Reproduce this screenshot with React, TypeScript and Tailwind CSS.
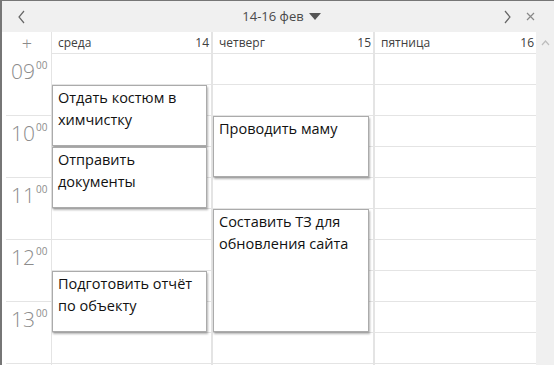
import React from 'react';

type Ev = { text: string; row: string };

const days: { name: string; num: number; events: Ev[] }[] = [
  {
    name: 'среда',
    num: 14,
    events: [
      { text: 'Отдать костюм в химчистку', row: 'row-start-2 row-span-2' },
      { text: 'Отправить документы', row: 'row-start-4 row-span-2' },
      { text: 'Подготовить отчёт по объекту', row: 'row-start-8 row-span-2' },
    ],
  },
  {
    name: 'четверг',
    num: 15,
    events: [
      { text: 'Проводить маму', row: 'row-start-3 row-span-2' },
      { text: 'Составить ТЗ для обновления сайта', row: 'row-start-6 row-span-4' },
    ],
  },
  { name: 'пятница', num: 16, events: [] },
];

const hours = ['09', '10', '11', '12', '13'];
const slots = Array.from({ length: 10 }, (_, i) => i);

const DayColumn: React.FC<{ day: (typeof days)[number]; last?: boolean; width: string }> = ({ day, last, width }) => (
  <div className={`${width} flex flex-col ${last ? '' : 'border-r-2 border-[#e4e4e4]'}`}>
    <div className="h-[22px] shrink-0 flex items-center justify-between pl-[6px] pr-[2px] border-b border-[#e4e4e4] text-[12px] text-[#404040]">
      <span>{day.name}</span>
      <span>{day.num}</span>
    </div>
    <div className="grid grid-rows-[repeat(10,31px)]">
      {slots.map((s) => (
        <div key={s} className="col-start-1 border-b border-[#e4e4e4]" style={{ gridRowStart: s + 1 }} />
      ))}
      {day.events.map((e) => (
        <div
          key={e.text}
          className={`col-start-1 ${e.row} z-10 mr-[4px] mb-[1px] border border-[#ababab] bg-white shadow-[1px_2px_2px_rgba(0,0,0,0.3)] px-[5px] pt-[1px] text-[14.5px] leading-[22px] text-[#111]`}
        >
          {e.text}
        </div>
      ))}
    </div>
  </div>
);

const App: React.FC = () => {
  return (
    <div className="w-[554px] h-[365px] overflow-hidden border-l-2 border-t border-[#767676] bg-white flex flex-col font-['Open_Sans',sans-serif]">
      {/* top bar */}
      <div className="h-[31px] shrink-0 bg-[#f0f0f0] flex items-center px-[15px]">
        <svg width="10" height="14" viewBox="0 0 10 14" className="text-[#666]">
          <polyline points="7,1 2,7 7,13" fill="none" stroke="currentColor" strokeWidth="1.2" />
        </svg>
        <div className="flex-1 flex items-center justify-center gap-[5px] text-[13px] text-[#4a4a4a] pl-[34px]">
          <span>14-16 фев</span>
          <svg width="12" height="7" viewBox="0 0 12 7">
            <polygon points="0,0 12,0 6,7" fill="#555" />
          </svg>
        </div>
        <svg width="10" height="14" viewBox="0 0 10 14" className="text-[#666] mr-[14px]">
          <polyline points="3,1 8,7 3,13" fill="none" stroke="currentColor" strokeWidth="1.2" />
        </svg>
        <svg width="9" height="9" viewBox="0 0 9 9" className="text-[#888] mr-[4px]">
          <path d="M1 1 L8 8 M8 1 L1 8" stroke="currentColor" strokeWidth="1.2" />
        </svg>
      </div>

      {/* body */}
      <div className="flex flex-1">
        <div className="w-[50px] shrink-0 flex flex-col border-r border-[#e4e4e4]">
          <div className="h-[22px] shrink-0 flex items-center justify-center pl-[1px] text-[18px] font-light text-[#8a8a8a] leading-none">
            +
          </div>
          {hours.map((h) => (
            <div key={h} className="h-[62px] shrink-0 ml-[4px] border-b border-[#e4e4e4] flex items-start pl-[5px] pt-[5px] text-[#8c8c8c]">
              <span className="text-[21px] font-light leading-[24px]">{h}</span>
              <span className="text-[10px] leading-[12px] ml-[1px]">00</span>
            </div>
          ))}
        </div>
        <DayColumn day={days[0]} width="w-[161px]" />
        <DayColumn day={days[1]} width="w-[162px]" />
        <DayColumn day={days[2]} width="w-[161px]" last />
        <div className="w-[18px] shrink-0 bg-[#f0f0f0] flex justify-center pt-[8px]">
          <svg width="9" height="6" viewBox="0 0 9 6">
            <polyline points="1,5 4.5,1 8,5" fill="none" stroke="#bdbdbd" strokeWidth="1.2" />
          </svg>
        </div>
      </div>
    </div>
  );
};

export default App;
